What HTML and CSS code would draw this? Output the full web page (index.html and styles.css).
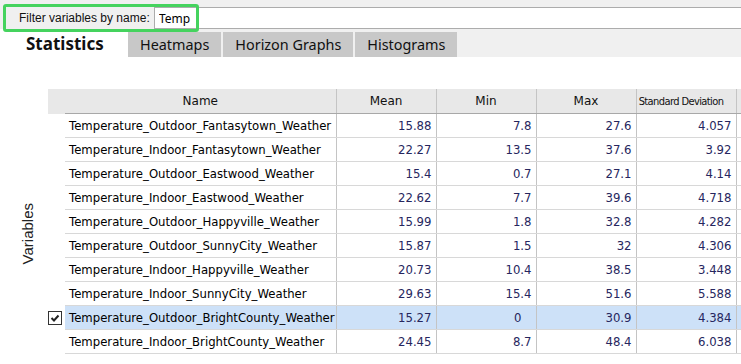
FILE: index.html
```html
<!DOCTYPE html>
<html lang="en">
<head>
    <meta charset="UTF-8">
    <title>Variable statistics</title>
    <link rel="stylesheet" href="styles.css">
</head>
<body>
    <div class="toolbar">
        <label for="filter" class="filter-label">Filter variables by name:</label>
        <input type="text" id="filter" class="filter-input" value="Temp">
        <span class="highlight"></span>
    </div>

    <nav class="tabs">
        <span class="tab active">Statistics</span>
        <span class="tab">Heatmaps</span>
        <span class="tab">Horizon Graphs</span>
        <span class="tab">Histograms</span>
    </nav>

    <div class="main">
        <div class="axis"><span>Variables</span></div>
        <div class="grid-wrap">
            <table class="grid">
                <colgroup>
                    <col class="c-chk"><col class="c-name"><col class="c-num"><col class="c-num"><col class="c-num"><col class="c-num"><col class="c-rest">
                </colgroup>
                <thead>
                    <tr>
                        <th class="chk"></th>
                        <th>Name</th>
                        <th>Mean</th>
                        <th>Min</th>
                        <th>Max</th>
                        <th class="std">Standard Deviation</th>
                        <th class="rest"></th>
                    </tr>
                </thead>
                <tbody>
                    <tr><td class="chk"></td><td class="name">Temperature_Outdoor_Fantasytown_Weather</td><td>15.88</td><td>7.8</td><td>27.6</td><td>4.057</td><td class="rest"></td></tr>
                    <tr><td class="chk"></td><td class="name">Temperature_Indoor_Fantasytown_Weather</td><td>22.27</td><td>13.5</td><td>37.6</td><td>3.92</td><td class="rest"></td></tr>
                    <tr><td class="chk"></td><td class="name">Temperature_Outdoor_Eastwood_Weather</td><td>15.4</td><td>0.7</td><td>27.1</td><td>4.14</td><td class="rest"></td></tr>
                    <tr><td class="chk"></td><td class="name">Temperature_Indoor_Eastwood_Weather</td><td>22.62</td><td>7.7</td><td>39.6</td><td>4.718</td><td class="rest"></td></tr>
                    <tr><td class="chk"></td><td class="name">Temperature_Outdoor_Happyville_Weather</td><td>15.99</td><td>1.8</td><td>32.8</td><td>4.282</td><td class="rest"></td></tr>
                    <tr><td class="chk"></td><td class="name">Temperature_Outdoor_SunnyCity_Weather</td><td>15.87</td><td>1.5</td><td>32</td><td>4.306</td><td class="rest"></td></tr>
                    <tr><td class="chk"></td><td class="name">Temperature_Indoor_Happyville_Weather</td><td>20.73</td><td>10.4</td><td>38.5</td><td>3.448</td><td class="rest"></td></tr>
                    <tr><td class="chk"></td><td class="name">Temperature_Indoor_SunnyCity_Weather</td><td>29.63</td><td>15.4</td><td>51.6</td><td>5.588</td><td class="rest"></td></tr>
                    <tr class="selected">
                        <td class="chk">
                            <span class="checkbox">
                                <svg width="12" height="12" viewBox="0 0 12 12"><path d="M2.5 6 L5 8.5 L9.5 3.5" fill="none" stroke="#222" stroke-width="2"/></svg>
                            </span>
                        </td>
                        <td class="name">Temperature_Outdoor_BrightCounty_Weather</td><td>15.27</td><td class="zero">0</td><td>30.9</td><td>4.384</td><td class="rest"></td>
                    </tr>
                    <tr><td class="chk"></td><td class="name">Temperature_Indoor_BrightCounty_Weather</td><td>24.45</td><td>8.7</td><td>48.4</td><td>6.038</td><td class="rest"></td></tr>
                </tbody>
            </table>
        </div>
    </div>
</body>
</html>
```

FILE: styles.css
```css
body { margin: 0; width: 741px; height: 364px; overflow: hidden; background: #fff; font-family: "Noto Sans", sans-serif; color: #000; }

/* filter bar */
.toolbar { position: relative; display: flex; align-items: flex-end; height: 29px; background: #f0f0f0; }
.filter-label { width: 135px; padding-left: 19px; font: 12px "Liberation Sans", sans-serif; line-height: 22px; color: #111; white-space: nowrap; }
.filter-input { flex: 1; height: 22px; box-sizing: border-box; margin: 0; padding: 0 4px; border: 1px solid #acacac; border-right: none; font: 12px "Noto Sans", sans-serif; color: #000; outline: none; }
.highlight { position: absolute; left: 3px; top: 4px; width: 190px; height: 22px; border: 3px solid #45d35e; border-radius: 3px; pointer-events: none; }

/* tabs */
.tabs { display: flex; align-items: flex-end; height: 28px; background: #f0f0f0; }
.tab { height: 25px; margin-right: 2px; padding: 0 12px; background: #c8c8c8; font-size: 14.4px; line-height: 25px; color: #111; }
.tab.active { width: 102px; height: 28px; margin-right: 0; padding: 0 0 0 26px; background: #fff; font-weight: bold; font-size: 17px; line-height: 30px; }

/* table */
.main { display: flex; margin-top: 32px; }
.axis { width: 42px; padding: 24px 0 0 6px; display: flex; align-items: center; justify-content: center; }
.axis span { writing-mode: vertical-rl; transform: rotate(180deg); font: 15px "Liberation Sans", sans-serif; color: #222; }
.grid-wrap { flex: 1; overflow: hidden; }
.grid { table-layout: fixed; width: 713px; border-collapse: collapse; font: 11.7px "DejaVu Sans", sans-serif; }
.c-chk { width: 17px; }
.c-name { width: 271px; }
.c-num { width: 100px; }
.c-rest { width: 25px; }
.grid th { height: 24px; padding: 0; background: #e8e8e8; font-weight: normal; font-size: 12px; border-right: 1px solid #c4c4c4; border-bottom: 1px solid #a8a8a8; color: #111; }
.grid th.chk { border: none; }
.grid th.std { padding-right: 10px; font-family: "DejaVu Sans Condensed", "DejaVu Sans", sans-serif; font-size: 11px; letter-spacing: -0.6px; }
.grid td { height: 23px; padding: 0 4px 0 0; text-align: right; color: #26265e; border-right: 1px solid #c4c4c4; border-bottom: 1px solid #d8d8d8; white-space: nowrap; }
.grid td.name { padding: 0 0 0 4px; text-align: left; color: #000; }
.grid td.chk { padding: 0; border: none; background: #fff; }
.grid td.rest { border-right: none; }
.grid td.zero { padding-right: 14px; }
.grid .selected td { background: #cde1f8; }
.grid .selected td.chk { background: #fff; }
.checkbox { display: block; width: 12px; height: 12px; border: 1px solid #333; background: #fff; }
.checkbox svg { display: block; }
```
